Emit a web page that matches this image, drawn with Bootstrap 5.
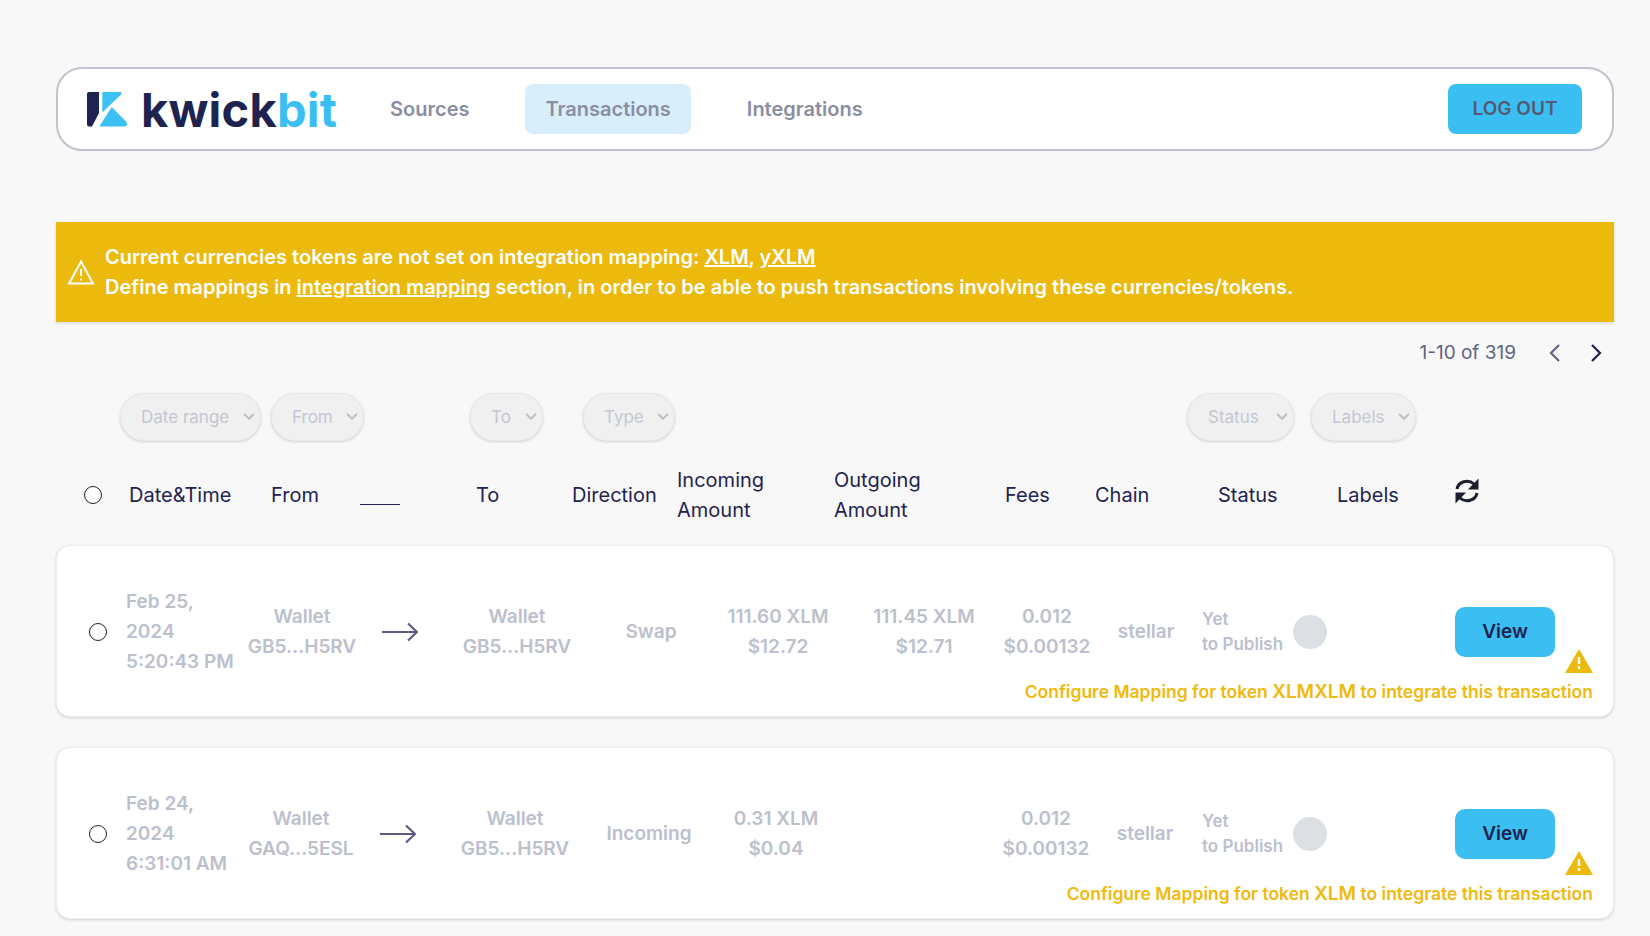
<!DOCTYPE html>
<html>
<head>
    <title>Transactions</title>
    <link rel="stylesheet" href="https://cdn.jsdelivr.net/npm/bootstrap@5.3.0/dist/css/bootstrap.min.css">
    <style>
        body {
            background: #f8f8f8;
            font-family: "Inter", "Noto Sans", sans-serif;
            font-size: 19px;
            line-height: 30px;
            color: #1f2350;
        }

        .page-wrap {
            padding: 67px 36px 17px 56px;
        }

        .top-bar.navbar {
            height: 84px;
            background: #fff;
            border: 2px solid #bfc3ce;
            border-radius: 26px;
            padding: 0 30px 0 29px;
        }

        .brand-logo.navbar-brand {
            gap: 13px;
            margin-right: 33px;
            padding: 0;
        }

        .brand-logo svg {
            width: 41px;
            height: 35px;
        }

        .brand-name {
            font-size: 47px;
            font-weight: 700;
            line-height: 35px;
            letter-spacing: 0.2px;
            color: #1f2350;
        }

        .brand-name span {
            color: #3bbff2;
        }

        .top-bar .navbar-nav .top-link.nav-link {
            height: 50px;
            display: flex;
            align-items: center;
            padding: 0 20px;
            margin-right: 36px;
            border-radius: 8px;
            font-size: 20px;
            font-weight: 600;
            color: #8b8da1;
        }

        .top-bar .navbar-nav .top-link.nav-link.active {
            background: #d8effb;
            color: #8b8da1;
        }

        .logout-btn {
            width: 134px;
            height: 50px;
            background: #3bbff2;
            border: 0;
            border-radius: 8px;
            font-size: 19px;
            font-weight: 600;
            color: #555a72;
        }

        .warn-banner.alert {
            height: 100px;
            margin: 71px 0 0;
            padding: 0 0 0 11px;
            gap: 10px;
            background: #ecb90d;
            border: 0;
            border-radius: 0;
            box-shadow: 0 1px 3px rgba(0, 0, 0, .15);
            color: #fff;
            font-size: 20px;
            font-weight: 600;
        }

        .warn-banner a {
            color: #fff;
        }

        .pager-line {
            height: 62px;
            padding-right: 11px;
            color: #5f6384;
            font-size: 19px;
            font-weight: 400;
        }

        .pager-prev {
            margin-left: 32px;
        }

        .pager-next {
            margin-left: 27px;
        }

        .filter-line {
            height: 48px;
            margin-top: 9px;
        }

        .filter-pick.form-select {
            height: 48px;
            padding: 0 20px;
            background-color: #f0f0f0;
            background-image: url("data:image/svg+xml,%3csvg xmlns='http://www.w3.org/2000/svg' viewBox='0 0 16 16'%3e%3cpath fill='none' stroke='%23bcc0cd' stroke-width='2.4' stroke-linecap='round' stroke-linejoin='round' d='M3 5l5 5 5-5'/%3e%3c/svg%3e");
            background-position: right 4px center;
            background-size: 14px 14px;
            border: 1px solid #e8e8e8;
            border-radius: 24px;
            box-shadow: 0 1px 3px rgba(0, 0, 0, .16);
            font-size: 17px;
            line-height: 44px;
            color: #c4c7d3;
        }

        .pick-date { width: 141px; margin-left: 64px; }
        .pick-from { width: 93px; margin-left: 10px; }
        .pick-to { width: 73px; margin-left: 106px; }
        .pick-type { width: 92px; margin-left: 40px; }
        .pick-status { width: 107px; margin-left: 512px; }
        .pick-labels { width: 105px; margin-left: 17px; }

        .ring-radio.form-check-input {
            display: block;
            width: 18px;
            height: 18px;
            margin: 0;
            border: 1px solid #222;
            background: #fff;
        }

        .head-line {
            display: grid;
            grid-template-columns: 45px 142px 89px 116px 96px 105px 157px 171px 90px 123px 119px 117px 1fr;
            align-items: center;
            height: 60px;
            margin-top: 24px;
            padding-left: 28px;
            font-size: 20px;
            font-weight: 400;
        }

        .head-blank {
            display: block;
            width: 40px;
            height: 1px;
            margin-top: 18px;
            background: #1f2350;
        }

        .head-sync {
            margin-bottom: 8px;
        }

        .tx-card.card {
            height: 172px;
            margin-top: 20px;
            padding: 41px 20px 0 0;
            border: 1px solid #eeeeee;
            border-radius: 14px;
            box-shadow: 0 1px 3px rgba(0, 0, 0, .16);
            color: #bcc0cd;
            font-weight: 600;
        }

        .tx-card + .tx-card {
            margin-top: 30px;
        }

        .tx-grid {
            display: grid;
            grid-template-columns: 69px 116px 120px 76px 158px 110px 144px 148px 98px 100px 6px 91px 34px 128px 100px 1fr;
            align-items: center;
            height: 90px;
            text-align: center;
        }

        .tx-grid.shift-b {
            grid-template-columns: 69px 114px 122px 72px 162px 106px 148px 148px 96px 102px 6px 91px 34px 128px 100px 1fr;
        }

        .tx-date {
            text-align: left;
            white-space: nowrap;
        }

        .tx-radio {
            padding-left: 32px;
        }

        .tx-status {
            grid-column: 12;
            text-align: left;
            font-size: 17px;
            line-height: 25px;
            white-space: nowrap;
        }

        .status-dot {
            width: 34px;
            height: 34px;
            border-radius: 50%;
            background: #dcdfe4;
        }

        .view-btn.btn {
            grid-column: 15;
            width: 100px;
            height: 50px;
            padding: 0;
            background: #3bbff2;
            border: 0;
            border-radius: 10px;
            font-size: 19px;
            font-weight: 600;
            color: #1f2350;
        }

        .card-warn {
            grid-column: 16;
            align-self: end;
            justify-self: end;
            width: 28px;
            height: 24px;
            margin-bottom: 4px;
        }

        .map-note {
            text-align: right;
            font-size: 17.5px;
            color: #f0b90b;
            font-weight: 600;
            white-space: nowrap;
        }

        .map-note b {
            font-size: 19px;
            font-weight: 600;
        }
    </style>
</head>
<body>
    <div class="page-wrap">
        <nav class="top-bar navbar navbar-expand d-flex align-items-center">
            <a class="brand-logo navbar-brand d-flex align-items-center" href="#">
                <svg viewBox="0 0 41 35">
                    <path fill="#1f2350" d="M2 0H12V21L5 34.5H2Q0 34.5 0 32.5V2Q0 0 2 0Z"/>
                    <path fill="#3bc1f4" d="M15.3 0H33Q36 0 34 2.5L15.3 20.5Z"/>
                    <path fill="#3bc1f4" d="M24.7 15L39.5 30Q41.5 34.5 37 34.5H12.3Z"/>
                </svg>
                <span class="brand-name">kwick<span>bit</span></span>
            </a>
            <ul class="navbar-nav">
                <li class="nav-item"><a class="top-link nav-link" href="#">Sources</a></li>
                <li class="nav-item"><a class="top-link nav-link active" href="#">Transactions</a></li>
                <li class="nav-item"><a class="top-link nav-link" href="#">Integrations</a></li>
            </ul>
            <button class="logout-btn btn ms-auto">LOG OUT</button>
        </nav>

        <div class="warn-banner alert d-flex align-items-center" role="alert">
            <svg width="28" height="26" viewBox="0 0 28 26" fill="none" stroke="#fff" stroke-width="2">
                <path d="M14 2.5L26 24.5H2Z" stroke-linejoin="miter"/>
                <path d="M14 10V17M14 19.5V21.5"/>
            </svg>
            <div>
                Current currencies tokens are not set on integration mapping: <a href="#">XLM</a>, <a href="#">yXLM</a><br>
                Define mappings in <a href="#">integration mapping</a> section, in order to be able to push transactions involving these currencies/tokens.
            </div>
        </div>

        <div class="pager-line d-flex align-items-center justify-content-end">
            <span>1-10 of 319</span>
            <svg class="pager-prev" width="14" height="20" viewBox="0 0 14 20" fill="none" stroke="#5f6384" stroke-width="2.2"><path d="M11 2L3 10L11 18"/></svg>
            <svg class="pager-next" width="14" height="20" viewBox="0 0 14 20" fill="none" stroke="#1f2350" stroke-width="2.2"><path d="M3 2L11 10L3 18"/></svg>
        </div>

        <div class="filter-line d-flex">
            <select class="filter-pick form-select pick-date"><option>Date range</option></select>
            <select class="filter-pick form-select pick-from"><option>From</option></select>
            <select class="filter-pick form-select pick-to"><option>To</option></select>
            <select class="filter-pick form-select pick-type"><option>Type</option></select>
            <select class="filter-pick form-select pick-status"><option>Status</option></select>
            <select class="filter-pick form-select pick-labels"><option>Labels</option></select>
        </div>

        <div class="head-line">
            <input class="ring-radio form-check-input" type="radio">
            <span>Date&amp;Time</span>
            <span>From</span>
            <span class="head-blank"></span>
            <span>To</span>
            <span>Direction</span>
            <span>Incoming<br>Amount</span>
            <span>Outgoing<br>Amount</span>
            <span>Fees</span>
            <span>Chain</span>
            <span>Status</span>
            <span>Labels</span>
            <svg class="head-sync" width="26" height="28" viewBox="0 0 26 28" fill="none" stroke="#1c1f2b" stroke-width="3">
                <path d="M3 12A10 9 0 0 1 20 7"/>
                <path d="M23 16A10 9 0 0 1 6 21"/>
                <path fill="#1c1f2b" stroke="none" d="M24.5 1.5V12.5H14Z"/>
                <path fill="#1c1f2b" stroke="none" d="M1.5 26.5V15.5H12Z"/>
            </svg>
        </div>

        <div class="tx-card card">
            <div class="tx-grid">
                <div class="tx-radio"><input class="ring-radio form-check-input" type="radio"></div>
                <div class="tx-date">Feb 25,<br>2024<br>5:20:43 PM</div>
                <div>Wallet<br>GB5...H5RV</div>
                <svg class="mx-auto" width="36" height="20" viewBox="0 0 36 20" fill="none" stroke="#5c5a80" stroke-width="2.2"><path d="M0 10H35M26 1.5L35 10L26 18.5"/></svg>
                <div>Wallet<br>GB5...H5RV</div>
                <div>Swap</div>
                <div>111.60 XLM<br>$12.72</div>
                <div>111.45 XLM<br>$12.71</div>
                <div>0.012<br>$0.00132</div>
                <div>stellar</div>
                <div class="tx-status">Yet<br>to Publish</div>
                <div class="status-dot"></div>
                <button class="view-btn btn">View</button>
                <svg class="card-warn" viewBox="0 0 28 24">
                    <path fill="#ecb90d" d="M14 0L28 24H0Z"/>
                    <path stroke="#fff" stroke-width="2.4" d="M14 8V15M14 17V20"/>
                </svg>
            </div>
            <div class="map-note">Configure Mapping for token <b>XLMXLM</b> to integrate this transaction</div>
        </div>

        <div class="tx-card card">
            <div class="tx-grid shift-b">
                <div class="tx-radio"><input class="ring-radio form-check-input" type="radio"></div>
                <div class="tx-date">Feb 24,<br>2024<br>6:31:01 AM</div>
                <div>Wallet<br>GAQ...5ESL</div>
                <svg class="mx-auto" width="36" height="20" viewBox="0 0 36 20" fill="none" stroke="#5c5a80" stroke-width="2.2"><path d="M0 10H35M26 1.5L35 10L26 18.5"/></svg>
                <div>Wallet<br>GB5...H5RV</div>
                <div>Incoming</div>
                <div>0.31 XLM<br>$0.04</div>
                <div></div>
                <div>0.012<br>$0.00132</div>
                <div>stellar</div>
                <div class="tx-status">Yet<br>to Publish</div>
                <div class="status-dot"></div>
                <button class="view-btn btn">View</button>
                <svg class="card-warn" viewBox="0 0 28 24">
                    <path fill="#ecb90d" d="M14 0L28 24H0Z"/>
                    <path stroke="#fff" stroke-width="2.4" d="M14 8V15M14 17V20"/>
                </svg>
            </div>
            <div class="map-note">Configure Mapping for token <b>XLM</b> to integrate this transaction</div>
        </div>
    </div>

    <script src="https://cdn.jsdelivr.net/npm/bootstrap@5.3.0/dist/js/bootstrap.bundle.min.js"></script>
</body>
</html>
